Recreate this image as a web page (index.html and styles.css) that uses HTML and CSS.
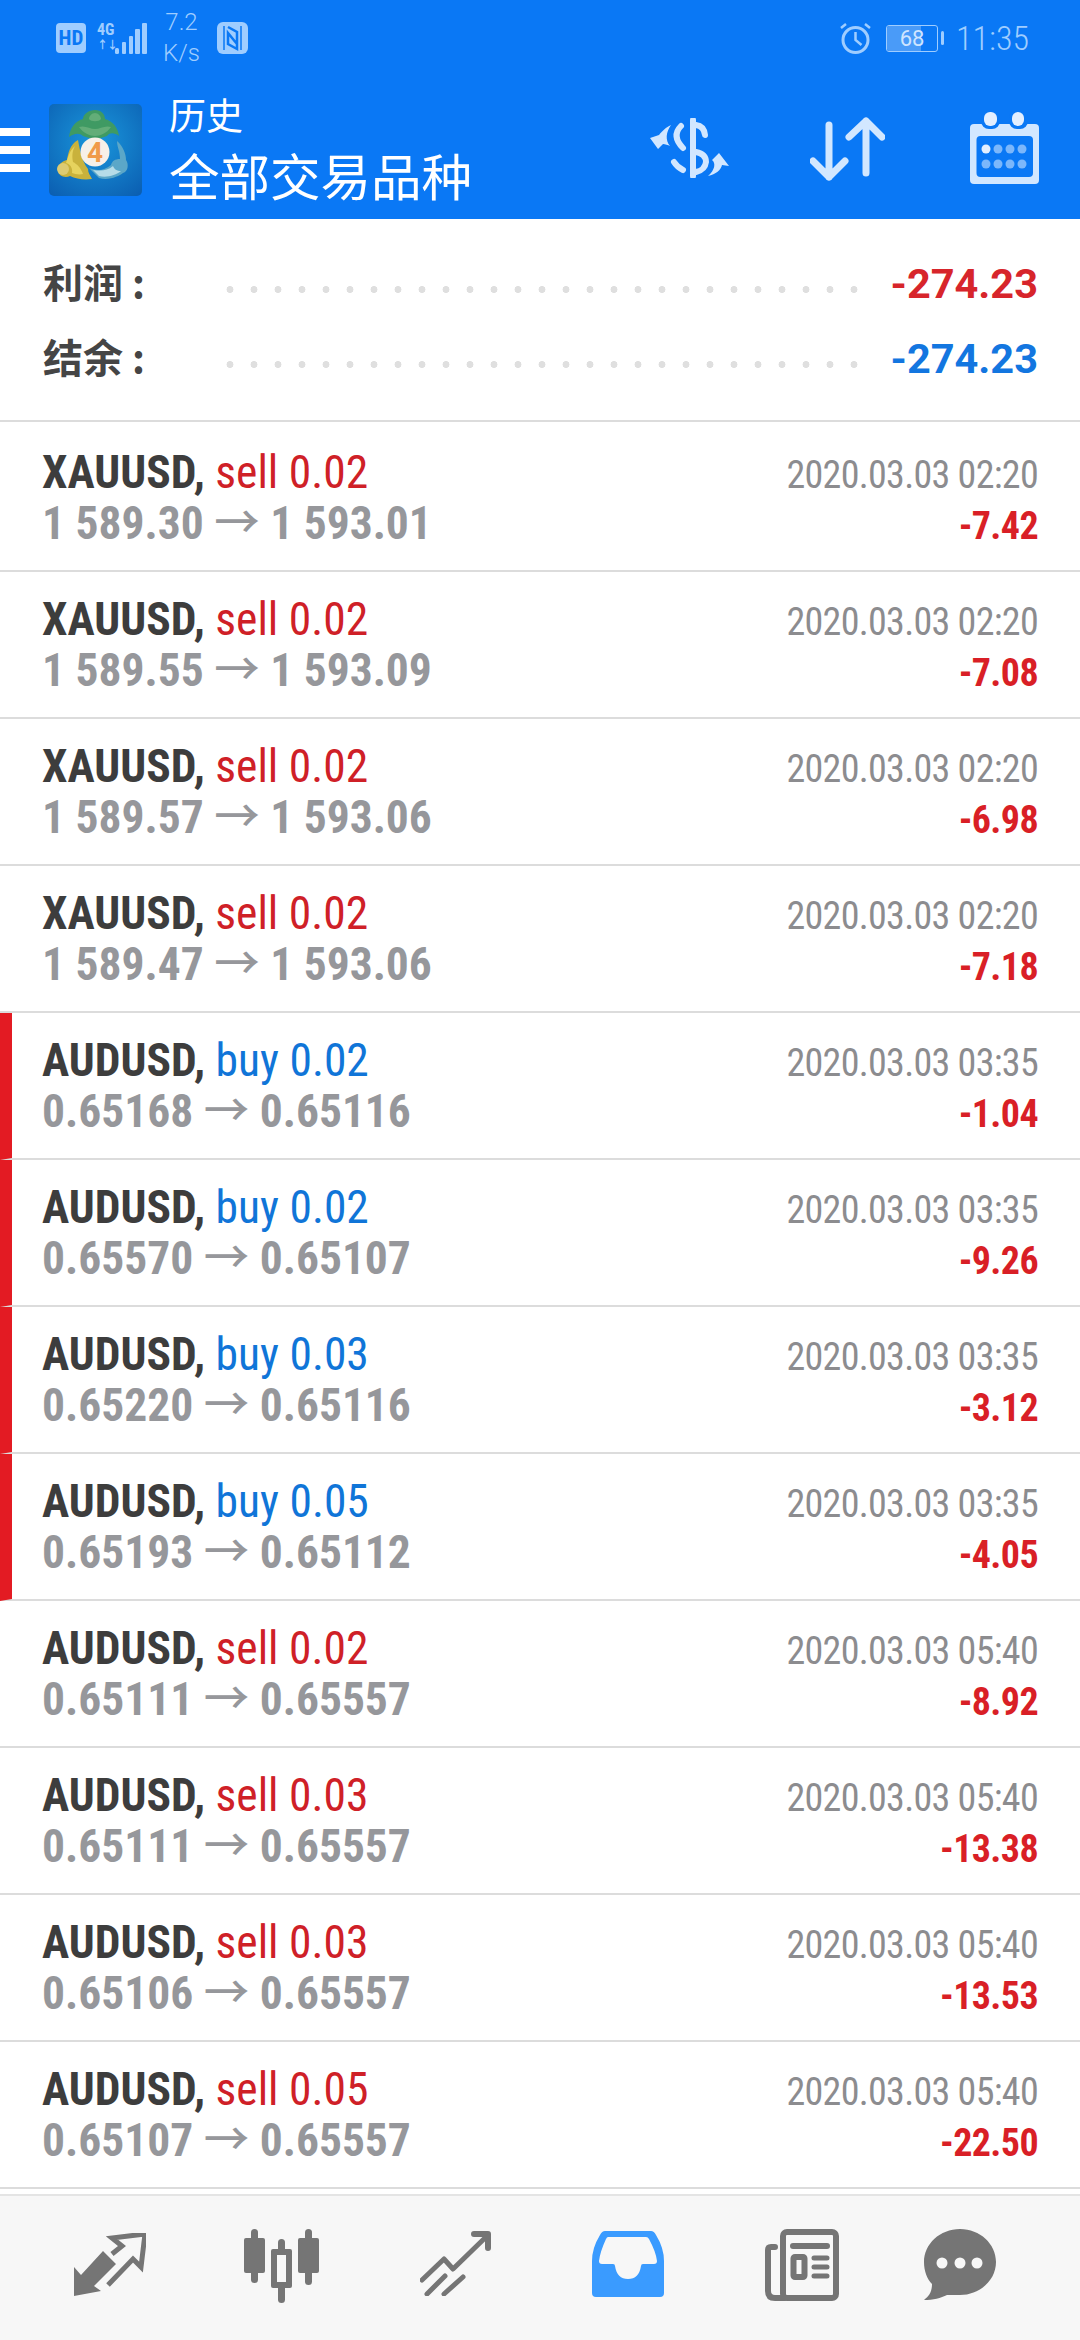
FILE: index.html
```html
<!DOCTYPE html>
<html lang="zh">
<head>
<meta charset="utf-8">
<title>历史</title>
<link rel="stylesheet" href="styles.css">
</head>
<body>
<div class="app">
  <header class="top">
    <div class="status">
      <span class="hd">HD</span>
      <span class="net">
        <span class="net-labels"><span class="net-g">4G</span><span class="net-a">↑↓</span></span>
        <svg class="net-bars" width="32" height="31" viewBox="0 0 32 31"><g fill="#9fcdff"><rect x="0" y="25" width="4" height="6" rx="1.500"/><rect x="7" y="19" width="4" height="12" rx="1"/><rect x="14" y="13" width="4" height="18" rx="1"/><rect x="20" y="6" width="5" height="25" rx="1"/><rect x="27" y="0" width="5" height="31" rx="1"/></g></svg>
      </span>
      <span class="speed"><span>7.2</span><span>K/s</span></span>
      <svg class="nfc" width="31" height="32" viewBox="0 0 31 32"><rect width="31" height="32" rx="6" fill="#9fcdff"/><path d="M7 4v24M24 4v24" fill="none" stroke="#0a78f5" stroke-width="1.500"/><path d="M11 5l9 5v17l-9-5V11l9 11" fill="none" stroke="#0a78f5" stroke-width="2.500"/></svg>
      <span class="grow"></span>
      <svg class="alarm" width="31" height="32" viewBox="0 0 31 32"><circle cx="15.500" cy="18" r="12.500" fill="none" stroke="#9fcdff" stroke-width="3"/><path d="M15.500 10v8l6 5M1 6l5-4M30 6l-5-4" fill="none" stroke="#9fcdff" stroke-width="2.500"/></svg>
      <span class="battery"><span class="cell"><span class="cell-fill"></span><span class="cell-num">68</span></span><span class="nub"></span></span>
      <span class="clock">11:35</span>
    </div>
    <div class="bar">
      <span class="burger"><i></i><i></i><i></i></span>
      <svg class="logo" width="93" height="92" viewBox="0 0 93 92">
        <defs><radialGradient id="lg" cx="0.500" cy="0.400" r="0.750"><stop offset="0" stop-color="#1a97dc"/><stop offset="1" stop-color="#0b5fb2"/></radialGradient></defs>
        <rect width="93" height="92" rx="5" fill="url(#lg)"/>
        <path d="M46 6c6 0 10 4 10 9 8 2 13 9 14 17-4-3-9-4-12 0l-12 4-12-4c-4-4-10-2-14 1 1-9 6-16 14-18 0-5 6-9 12-9z" fill="#3f9a63"/>
        <path d="M46 9c3 0 6 3 6 6-2 3-10 3-12 0 0-3 3-6 6-6zM30 23c6-2 11 2 16 2s10-4 16-2c-4 6-11 9-16 9s-12-3-16-9z" fill="#63ad78"/>
        <path d="M29 36c-8 4-10 14-11 20-5 1-9 5-9 10 0 7 8 8 12 6 6 3 14 4 22 3-2-4-4-6-4-10-6-8-8-18-10-29z" fill="#c9b23c"/>
        <path d="M26 42c-3 5-3 11-2 16 4 2 8 6 10 12-4 1-8 0-11-1 1-5-2-9-6-10 2-6 4-13 9-17z" fill="#e6d35e"/>
        <circle cx="14" cy="65" r="6" fill="#ddcb72"/>
        <path d="M68 37c6 5 9 13 9 19 3 4 2 12-3 13-4 3-14 8-24 5L40 64c6 2 14 4 22-3 1-4 4-6 9-6 0-8-3-12-3-18z" fill="#5ba7c8"/>
        <path d="M44 66c8 1 14 1 20-4 1 3 4 5 8 5-5 4-14 7-22 5z" fill="#b6dce8"/>
        <circle cx="46" cy="48" r="14.500" fill="#f7f0e8"/>
        <text class="logo-num" x="46" y="58" text-anchor="middle">4</text>
      </svg>
      <div class="titles">
        <span class="t-small">历史</span>
        <span class="t-big">全部交易品种</span>
      </div>
      <span class="grow"></span>
      <svg class="i-dollar" width="80" height="60" viewBox="0 0 80 60">
        <g fill="none" stroke="#d2e7ff" stroke-width="6" stroke-linecap="round">
          <path d="M43 2v56"/>
          <path d="M31 8Q21 18 33 30"/>
          <path d="M46 7Q54 8 55 17"/>
          <path d="M46 34Q56 36 56 44Q55 52 46 54"/>
          <path d="M24 44Q27 49 33 52"/>
        </g>
        <path fill="#d2e7ff" d="M21 7C13 11 10 16 9 17L0 20l8 11 5-5c2 0 5 1 7 2-5-6-4-14 1-21zM58 58c7-6 8-13 4-16l7-7 10 13-7-1c-1 5-6 9-14 11z"/>
      </svg>
      <svg class="i-sort" width="75" height="64" viewBox="0 0 75 64">
        <path d="M19 8v52M3 44l16 16 16-16M56 4v52M39 20L56 4l16 16" fill="none" stroke="#d2e7ff" stroke-width="7" stroke-linecap="round" stroke-linejoin="round"/>
      </svg>
      <svg class="i-cal" width="69" height="72" viewBox="0 0 69 72">
        <rect y="12" width="69" height="60" rx="4" fill="#d2e7ff"/>
        <rect x="6.500" y="24" width="56.500" height="41" rx="4" fill="#0a78f5"/>
        <rect x="11" y="-2" width="19" height="19" rx="8" fill="#0a78f5"/>
        <rect x="39" y="-2" width="19" height="19" rx="8" fill="#0a78f5"/>
        <rect x="14" y="0" width="13" height="14" rx="6" fill="#e3efff"/>
        <rect x="42" y="0" width="12" height="14" rx="6" fill="#e3efff"/>
        <g fill="#7cb7fb"><circle cx="16" cy="37" r="4.500" fill="#e3efff"/><circle cx="28" cy="37" r="4.500"/><circle cx="40" cy="37" r="4.500"/><circle cx="52" cy="37" r="4.500"/><circle cx="16" cy="52" r="4.500"/><circle cx="28" cy="52" r="4.500"/><circle cx="40" cy="52" r="4.500"/><circle cx="52" cy="52" r="4.500"/></g>
      </svg>
    </div>
  </header>

  <section class="summary">
    <div class="sum-row"><span class="sum-label">利润 :</span><span class="dots"></span><span class="sum-val neg">-274.23</span></div>
    <div class="sum-row"><span class="sum-label">结余 :</span><span class="dots"></span><span class="sum-val bal">-274.23</span></div>
  </section>

  <main class="list">
    <div class="row first"><div class="col"><div class="l1"><b>XAUUSD,</b> <span class="sell">sell 0.02</span></div><div class="l2">1 589.30 <span class="arr">→</span> 1 593.01</div></div><div class="col right"><div class="date">2020.03.03 02:20</div><div class="pnl">-7.42</div></div></div>
    <div class="row"><div class="col"><div class="l1"><b>XAUUSD,</b> <span class="sell">sell 0.02</span></div><div class="l2">1 589.55 <span class="arr">→</span> 1 593.09</div></div><div class="col right"><div class="date">2020.03.03 02:20</div><div class="pnl">-7.08</div></div></div>
    <div class="row"><div class="col"><div class="l1"><b>XAUUSD,</b> <span class="sell">sell 0.02</span></div><div class="l2">1 589.57 <span class="arr">→</span> 1 593.06</div></div><div class="col right"><div class="date">2020.03.03 02:20</div><div class="pnl">-6.98</div></div></div>
    <div class="row"><div class="col"><div class="l1"><b>XAUUSD,</b> <span class="sell">sell 0.02</span></div><div class="l2">1 589.47 <span class="arr">→</span> 1 593.06</div></div><div class="col right"><div class="date">2020.03.03 02:20</div><div class="pnl">-7.18</div></div></div>
    <div class="row mark"><div class="col"><div class="l1"><b>AUDUSD,</b> <span class="buy">buy 0.02</span></div><div class="l2">0.65168 <span class="arr">→</span> 0.65116</div></div><div class="col right"><div class="date">2020.03.03 03:35</div><div class="pnl">-1.04</div></div></div>
    <div class="row mark"><div class="col"><div class="l1"><b>AUDUSD,</b> <span class="buy">buy 0.02</span></div><div class="l2">0.65570 <span class="arr">→</span> 0.65107</div></div><div class="col right"><div class="date">2020.03.03 03:35</div><div class="pnl">-9.26</div></div></div>
    <div class="row mark"><div class="col"><div class="l1"><b>AUDUSD,</b> <span class="buy">buy 0.03</span></div><div class="l2">0.65220 <span class="arr">→</span> 0.65116</div></div><div class="col right"><div class="date">2020.03.03 03:35</div><div class="pnl">-3.12</div></div></div>
    <div class="row mark"><div class="col"><div class="l1"><b>AUDUSD,</b> <span class="buy">buy 0.05</span></div><div class="l2">0.65193 <span class="arr">→</span> 0.65112</div></div><div class="col right"><div class="date">2020.03.03 03:35</div><div class="pnl">-4.05</div></div></div>
    <div class="row"><div class="col"><div class="l1"><b>AUDUSD,</b> <span class="sell">sell 0.02</span></div><div class="l2">0.65111 <span class="arr">→</span> 0.65557</div></div><div class="col right"><div class="date">2020.03.03 05:40</div><div class="pnl">-8.92</div></div></div>
    <div class="row"><div class="col"><div class="l1"><b>AUDUSD,</b> <span class="sell">sell 0.03</span></div><div class="l2">0.65111 <span class="arr">→</span> 0.65557</div></div><div class="col right"><div class="date">2020.03.03 05:40</div><div class="pnl">-13.38</div></div></div>
    <div class="row"><div class="col"><div class="l1"><b>AUDUSD,</b> <span class="sell">sell 0.03</span></div><div class="l2">0.65106 <span class="arr">→</span> 0.65557</div></div><div class="col right"><div class="date">2020.03.03 05:40</div><div class="pnl">-13.53</div></div></div>
    <div class="row"><div class="col"><div class="l1"><b>AUDUSD,</b> <span class="sell">sell 0.05</span></div><div class="l2">0.65107 <span class="arr">→</span> 0.65557</div></div><div class="col right"><div class="date">2020.03.03 05:40</div><div class="pnl">-22.50</div></div></div>
  </main>

  <nav class="nav">
    <svg class="n1" width="72" height="64" viewBox="0 0 72 64"><path fill="#757575" d="M0 63V34l7 8 22-24 13 13-22 22 7 5z"/><path fill="none" stroke="#757575" stroke-width="5" d="M38 21l10-8-10-8 33-4-4 33-8-8-25 26"/></svg>
    <svg class="n2" width="75" height="74" viewBox="0 0 75 74"><g fill="#757575"><rect x="0" y="9" width="21" height="35" rx="2"/><rect x="7" y="0" width="7" height="54" rx="3.500"/><rect x="34" y="10" width="7" height="64" rx="3.500"/><rect x="27" y="20" width="21" height="39" rx="2"/><rect x="54" y="9" width="21" height="35" rx="2"/><rect x="61" y="0" width="7" height="56" rx="3.500"/></g><rect x="33" y="26" width="9" height="27" fill="#f7f7f7"/></svg>
    <svg class="n3" width="71" height="65" viewBox="0 0 71 65"><g fill="none" stroke="#757575" stroke-width="5" stroke-linecap="round" stroke-linejoin="round"><path d="M2 49l22-21 9 10 34-33"/><path d="M7 63l18-18M24 63l19-17"/><path d="M54 3h14v14" stroke-width="6"/></g></svg>
    <svg class="n4" width="72" height="66" viewBox="0 0 72 66"><path fill="#3a9bff" d="M13 0h46q3 0 5 4 8 13 8 26v32q0 4-4 4H4q-4 0-4-4V30Q0 17 8 4q2-4 5-4z"/><path fill="#f7f7f7" d="M16 6h38q2 0 3 2 7 13 8 22 0 3-3 3H51q-2 0-2 2-2 13-13 13T23 35q0-2-2-2H10q-3 0-3-3 1-9 7-22 1-2 2-2z"/></svg>
    <svg class="n5" width="74" height="72" viewBox="0 0 74 72"><g fill="none" stroke="#757575" stroke-linecap="round" stroke-linejoin="round"><rect x="18" y="3" width="53" height="66" rx="4" stroke-width="6"/><path d="M10 18H6q-3 0-3 3v41q0 7 7 7h10" stroke-width="6"/><path d="M28 17h34" stroke-width="6"/><rect x="28.500" y="28" width="11" height="20" rx="1.500" stroke-width="6"/><path d="M49 29h13M49 38h13M49 47h13" stroke-width="5"/></g></svg>
    <svg class="n6" width="72" height="72" viewBox="0 0 72 72"><path fill="#757575" d="M36 0c20 0 36 15 36 33S56 66 36 66c-5 0-9 0-13 0-6 3-14 5-23 5 5-4 8-8 8-16-5-5-8-13-8-22C0 15 16 0 36 0z"/><g fill="#f7f7f7"><circle cx="18" cy="34" r="5.500"/><circle cx="36" cy="34" r="5.500"/><circle cx="53" cy="34" r="5.500"/></g></svg>
  </nav>
</div>
</body>
</html>
```
FILE: styles.css
```css
* { box-sizing: border-box; }
html, body { margin: 0; padding: 0; background: #fff; }
body { width: 1080px; height: 2340px; overflow: hidden; font-family: Roboto, "Noto Sans CJK SC", sans-serif; }
.app { display: flex; flex-direction: column; height: 2340px; }
.grow { flex: 1; }

.top { height: 219px; background: #0a78f5; color: #fff; flex: none; }
.status { height: 76px; display: flex; align-items: center; padding: 0 51px 0 56px; color: #9fcdff; }
.hd { width: 30px; height: 30px; border-radius: 4px; background: #9fcdff; color: #0a78f5; font-size: 21px; font-weight: 700; line-height: 30px; text-align: center; font-stretch: 75%; }
.net { display: flex; align-items: flex-end; margin-left: 11px; gap: 1px; height: 31px; }
.net-labels { display: flex; flex-direction: column; width: 17px; line-height: 16px; font-size: 16px; font-weight: 700; font-stretch: 75%; }
.net-g, .net-a { display: block; height: 16px; }
.net-a { font-size: 11px; letter-spacing: -1px; white-space: nowrap; }
.speed { display: flex; flex-direction: column; margin-left: 18px; font-size: 24px; line-height: 31px; font-weight: 300; align-items: center; width: 33px; }
.nfc { margin-left: 19px; }
.alarm { margin-right: 15px; }
.battery { display: flex; align-items: center; gap: 3px; margin-right: 12px; }
.cell { display: flex; width: 52px; height: 27px; border: 1px solid #9fcdff; border-radius: 3px; overflow: hidden; position: relative; justify-content: center; align-items: center; }
.cell-fill { position: absolute; left: 0; top: 0; bottom: 0; width: 68%; background: #4a9bf8; }
.cell-num { position: relative; color: #cfe5ff; font-size: 22px; }
.nub { width: 3px; height: 14px; border-radius: 2px; background: #9fcdff; }
.clock { font-size: 34px; font-weight: 300; line-height: 34px; font-stretch: 78%; }

.bar { height: 143px; display: flex; align-items: center; padding-right: 41px; }
.burger { display: flex; flex-direction: column; gap: 10px; width: 30px; margin-top: 5px; }
.burger i { display: block; height: 8px; background: #fff; }
.logo { margin-left: 19px; margin-top: 4px; }
.titles { display: flex; flex-direction: column; align-self: flex-start; gap: 8px; padding-top: 15px; margin-left: 27px; font-family: "Noto Sans CJK SC", sans-serif; font-weight: 400; }
.t-small { font-size: 37px; line-height: 46px; }
.t-big { font-size: 50.500px; line-height: 58px; }
.logo-num { font: 700 28px Roboto, sans-serif; fill: #f09a4a; }
.i-sort { margin-left: 80px; margin-top: 3px; }
.i-cal { margin-left: 85px; }

.summary { height: 203px; padding: 24px 42px 0 43px; border-bottom: 2px solid #dcdcdc; flex: none; }
.sum-row { display: flex; align-items: center; height: 75px; }
.sum-label { width: 175px; font-family: "Noto Sans CJK SC", sans-serif; font-size: 40px; font-weight: 700; color: #454545; white-space: nowrap; }
.dots { flex: 1; height: 7px; margin-top: 17px; background: radial-gradient(circle at center, #dfdfdf 3.200px, transparent 3.700px) 0 0 / 24px 7px repeat-x; }
.sum-val { width: 168px; padding-top: 5px; text-align: right; font-size: 41.500px; font-weight: 700; }
.neg { color: #d7252b; }
.bal { color: #1376e0; }

.list { flex: 1; display: flex; flex-direction: column; }
.row { height: 147px; padding: 22px 42px 0 42px; display: flex; justify-content: space-between; border-bottom: 2px solid #dcdcdc; flex: none; font-stretch: 75%; }
.row.first { height: 150px; padding-top: 25px; }
.row.mark { border-left: 12px solid #e31b23; padding-left: 30px; }
.col { display: flex; flex-direction: column; }
.right { align-items: flex-end; padding-top: 3px; }
.l1, .l2 { font-size: 45.500px; line-height: 51px; white-space: nowrap; }
.l1 b { color: #3d3d3d; font-weight: 700; }
.sell { color: #cf2027; }
.buy { color: #1075d8; }
.l2 { color: #96979b; font-weight: 700; }
.arr { font-family: "Noto Sans CJK SC", sans-serif; font-weight: 500; font-stretch: normal; line-height: 0; }
.date { font-size: 38px; line-height: 51px; color: #8c8c8f; white-space: nowrap; letter-spacing: -0.700px; }
.pnl { font-size: 38px; line-height: 51px; color: #d91f26; font-weight: 700; letter-spacing: -0.600px; }

.nav { height: 146px; flex: none; background: #f7f7f7; border-top: 2px solid #e4e4e4; display: flex; padding: 33px 0 0 74px; gap: 101px; align-items: flex-start; }
.n1 { margin-top: 4px; }
.n2 { margin-left: -3px; }
.n3 { margin-top: 2px; }
.n4 { margin-top: 2px; }
.n6 { margin-left: -16px; }
```
